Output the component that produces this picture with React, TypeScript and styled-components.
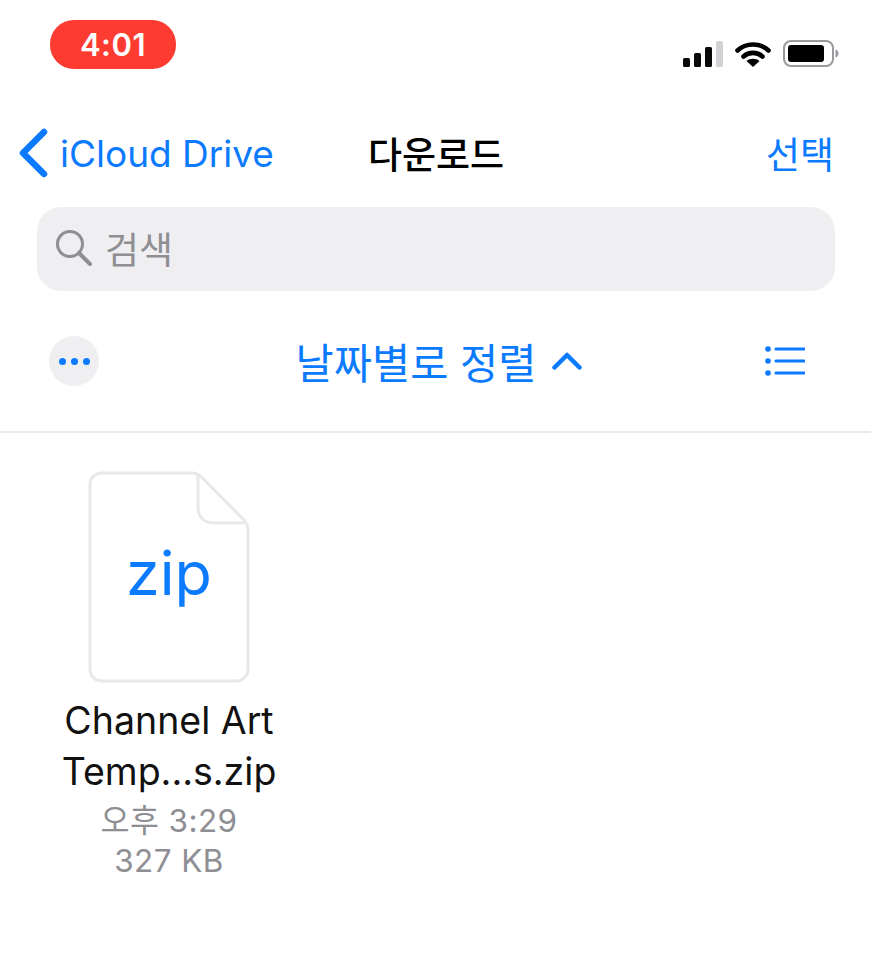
import * as React from "react";
import styled, { createGlobalStyle } from "styled-components";

const blue = "#0a7aff";
const fontStack = `"Inter", "Liberation Sans", "Noto Sans CJK KR", sans-serif`;

const GlobalStyle = createGlobalStyle`
  html, body {
    margin: 0;
    padding: 0;
    background: #fff;
    font-family: ${fontStack};
  }
`;

const Page = styled.div`
  width: 871px;
  height: 960px;
  overflow: hidden;
  background: #fff;
  display: flex;
  flex-direction: column;
`;

const StatusBar = styled.div`
  height: 70px;
  padding: 20px 32px 0 50px;
  box-sizing: border-box;
  display: flex;
  justify-content: space-between;
  align-items: flex-start;
`;

const TimePill = styled.div`
  width: 126px;
  height: 49px;
  border-radius: 24px;
  background: #fe3b30;
  color: #fff;
  font-size: 31px;
  font-weight: 600;
  letter-spacing: 0.5px;
  display: flex;
  align-items: center;
  justify-content: center;
`;

const StatusIcons = styled.div`
  display: flex;
  align-items: center;
  margin-top: 20px;
  gap: 12px;
`;

const NavBar = styled.div`
  height: 137px;
  padding: 29px 37px 0 18px;
  box-sizing: border-box;
  display: grid;
  grid-template-columns: 350px 1fr auto;
  align-items: center;
`;

const BackLink = styled.div`
  display: flex;
  align-items: center;
  gap: 10px;
  color: ${blue};
  font-size: 37px;
`;

const NavTitle = styled.div`
  font-size: 37px;
  font-weight: 500;
  color: #000;
`;

const NavAction = styled.div`
  font-size: 37px;
  color: ${blue};
`;

const SearchBox = styled.div`
  margin: 0 36px 0 37px;
  height: 84px;
  box-sizing: border-box;
  border-radius: 24px;
  background: #efeff1;
  display: flex;
  align-items: center;
  padding: 0 0 3px 18px;
  gap: 12px;
  color: #8e8e93;
  font-size: 37px;
`;

const SortBar = styled.div`
  height: 142px;
  padding: 0 66px 0 49px;
  display: flex;
  align-items: center;
  justify-content: space-between;
  border-bottom: 2px solid #e9e9eb;
  box-sizing: border-box;
`;

const MoreButton = styled.div`
  width: 50px;
  height: 50px;
  border-radius: 50%;
  background: #efeff1;
  display: flex;
  align-items: center;
  justify-content: center;
  gap: 5px;
`;

const Dot = styled.span`
  width: 7px;
  height: 7px;
  border-radius: 50%;
  background: ${blue};
`;

const SortLabel = styled.div`
  display: flex;
  align-items: center;
  gap: 16px;
  color: ${blue};
  font-size: 41.5px;
  margin-left: 14px;
`;

const FileGrid = styled.div`
  padding: 38px 0 0 54px;
  display: flex;
`;

const FileCard = styled.div`
  width: 230px;
  display: flex;
  flex-direction: column;
  align-items: center;
`;

const FileName = styled.div`
  margin-top: 12px;
  font-size: 37.5px;
  line-height: 51px;
  color: #111;
  text-align: center;
  white-space: nowrap;
`;

const FileMeta = styled.div`
  font-size: 31.5px;
  line-height: 40px;
  color: #8e8e93;
  letter-spacing: 0.4px;
  text-align: center;
  margin-top: 4px;
  white-space: nowrap;
`;

const SignalIcon = () => (
  <svg width="40" height="26" viewBox="0 0 40 26">
    <rect x="0" y="17" width="7" height="9" rx="1.5" fill="#0a0a0a" />
    <rect x="11" y="12" width="7" height="14" rx="1.5" fill="#0a0a0a" />
    <rect x="22" y="6" width="7" height="20" rx="1.5" fill="#0a0a0a" />
    <rect x="33" y="0" width="7" height="26" rx="1.5" fill="#d2d2d6" />
  </svg>
);

const WifiIcon = () => (
  <svg width="36" height="26" viewBox="0 0 36 26" fill="none">
    <path d="M2.5 9.5C11 1.5 25 1.5 33.5 9.5" stroke="#000" strokeWidth="4.6" strokeLinecap="round" />
    <path d="M8.5 15.5C13.8 10.7 22.2 10.7 27.5 15.5" stroke="#000" strokeWidth="4.6" strokeLinecap="round" />
    <path d="M18 26L11.5 20C15 17 21 17 24.5 20Z" fill="#000" />
  </svg>
);

const BatteryIcon = () => (
  <svg width="56" height="27" viewBox="0 0 56 27" fill="none">
    <rect x="1" y="1" width="49" height="25" rx="7" stroke="#9a9a9e" strokeWidth="2" />
    <rect x="5" y="5" width="36" height="17" rx="3" fill="#000" />
    <path d="M52.5 9.5C54.5 10 55.5 11.5 55.5 13.5C55.5 15.5 54.5 17 52.5 17.5Z" fill="#9a9a9e" />
  </svg>
);

const BackChevron = () => (
  <svg width="32" height="50" viewBox="0 0 32 50" fill="none">
    <path d="M26 4L5 25L26 46" stroke={blue} strokeWidth="6.5" strokeLinecap="round" strokeLinejoin="round" />
  </svg>
);

const SearchIcon = () => (
  <svg width="38" height="38" viewBox="0 0 38 38" fill="none">
    <circle cx="15" cy="15" r="12.5" stroke="#8e8e93" strokeWidth="3" />
    <path d="M24 24L35 35" stroke="#8e8e93" strokeWidth="4" strokeLinecap="round" />
  </svg>
);

const SortChevron = () => (
  <svg width="30" height="18" viewBox="0 0 30 18" fill="none">
    <path d="M2.5 15.5L15 3L27.5 15.5" stroke={blue} strokeWidth="4.5" strokeLinecap="round" strokeLinejoin="round" />
  </svg>
);

const ListIcon = () => (
  <svg width="40" height="30" viewBox="0 0 40 30" fill="none">
    <circle cx="3" cy="3" r="2.8" fill={blue} />
    <circle cx="3" cy="15" r="2.8" fill={blue} />
    <circle cx="3" cy="27" r="2.8" fill={blue} />
    <path d="M11 3H39M11 15H39M11 27H39" stroke={blue} strokeWidth="3.2" strokeLinecap="round" />
  </svg>
);

const ZipIcon = () => (
  <svg width="162" height="212" viewBox="0 0 162 212" fill="none">
    <path
      d="M14 2H104C108 2 111 3.5 114 6.5L154 47C158 51 160 54 160 58V198C160 205 155 210 148 210H14C7 210 2 205 2 198V14C2 7 7 2 14 2Z"
      stroke="#e8e8ea"
      strokeWidth="3"
    />
    <path d="M110 4V36C110 46 116 52 126 52H156" stroke="#e8e8ea" strokeWidth="3" />
    <text x="81" y="124" textAnchor="middle" fontFamily={fontStack} fontSize="61" fill={blue}>
      zip
    </text>
  </svg>
);

export default function App() {
  return (
    <Page>
      <GlobalStyle />
      <StatusBar>
        <TimePill>4:01</TimePill>
        <StatusIcons>
          <SignalIcon />
          <WifiIcon />
          <BatteryIcon />
        </StatusIcons>
      </StatusBar>
      <NavBar>
        <BackLink>
          <BackChevron />
          iCloud Drive
        </BackLink>
        <NavTitle>다운로드</NavTitle>
        <NavAction>선택</NavAction>
      </NavBar>
      <SearchBox>
        <SearchIcon />
        검색
      </SearchBox>
      <SortBar>
        <MoreButton>
          <Dot />
          <Dot />
          <Dot />
        </MoreButton>
        <SortLabel>
          날짜별로 정렬
          <SortChevron />
        </SortLabel>
        <ListIcon />
      </SortBar>
      <FileGrid>
        <FileCard>
          <ZipIcon />
          <FileName>
            Channel Art
            <br />
            Temp...s.zip
          </FileName>
          <FileMeta>
            오후 3:29
            <br />
            327 KB
          </FileMeta>
        </FileCard>
      </FileGrid>
    </Page>
  );
}
